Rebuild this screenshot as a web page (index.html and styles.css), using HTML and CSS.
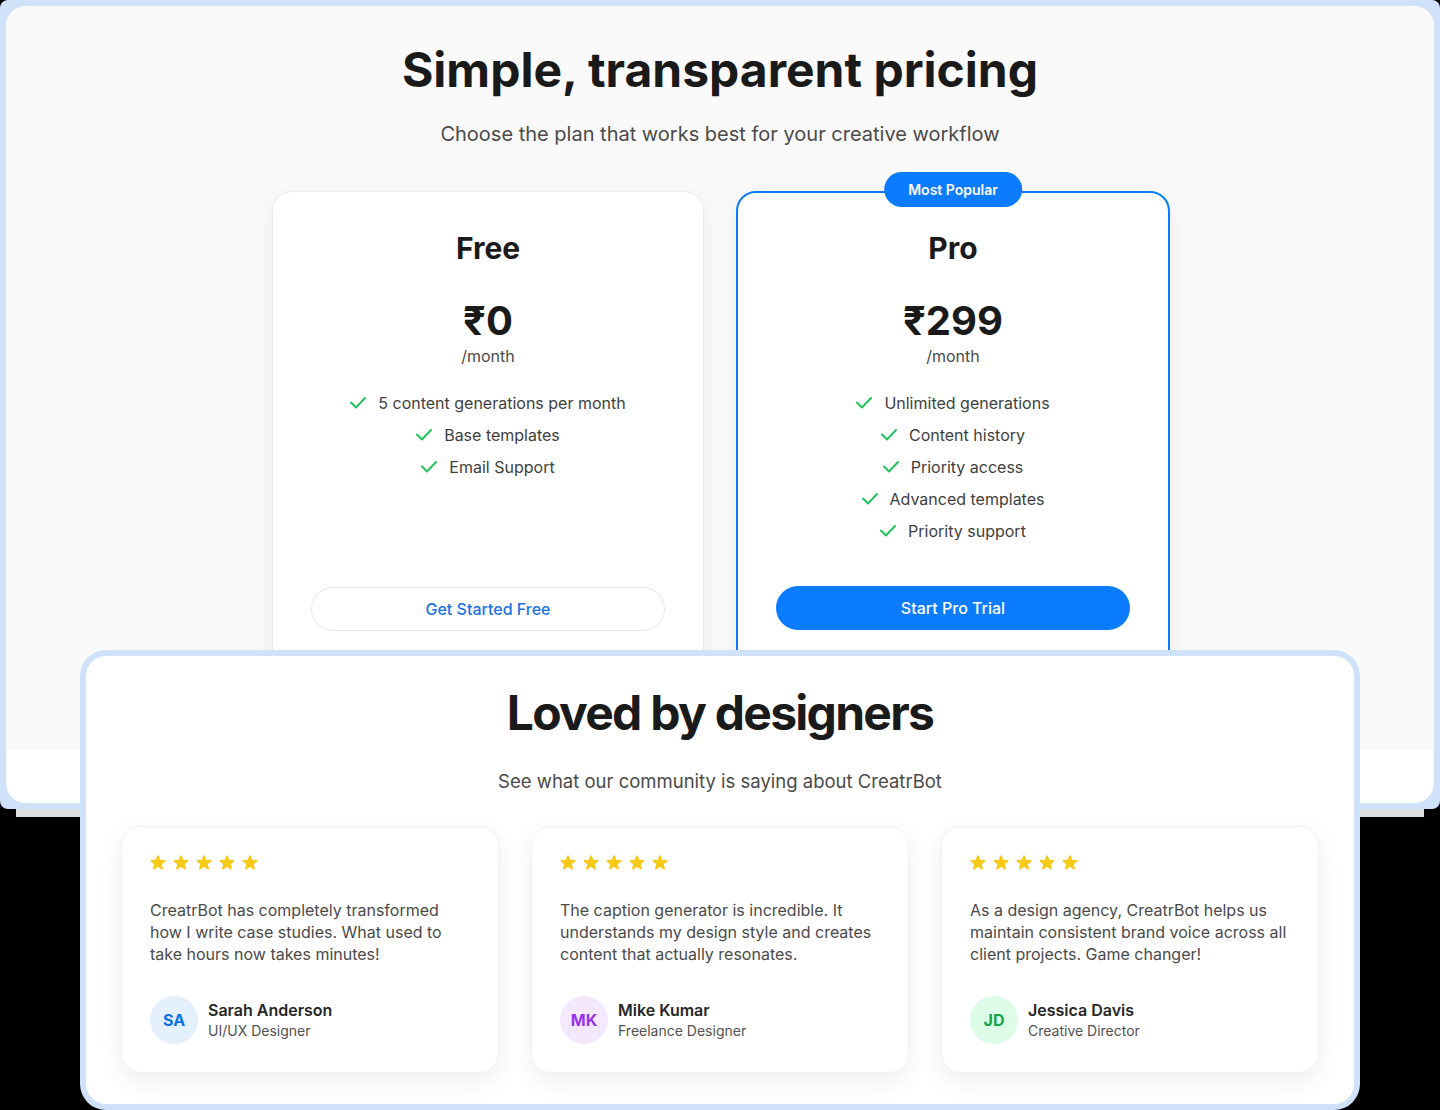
FILE: index.html
```html
<!DOCTYPE html>
<html lang="en">
<head>
<meta charset="utf-8">
<title>Pricing and testimonials</title>
<link rel="stylesheet" href="styles.css">
</head>
<body>
<div class="stage">
  <div class="window window-pricing">
    <div class="window-inner">
      <section class="pricing">
        <h1 class="heading">Simple, transparent pricing</h1>
        <p class="lead">Choose the plan that works best for your creative workflow</p>
        <div class="plans">
          <div class="plan">
            <h2 class="plan-name">Free</h2>
            <div class="price">₹0</div>
            <div class="per">/month</div>
            <ul class="features">
              <li><svg class="check" viewBox="0 0 16 16"><path d="M1 7.5L6 12.5L15 3"/></svg><span>5 content generations per month</span></li>
              <li><svg class="check" viewBox="0 0 16 16"><path d="M1 7.5L6 12.5L15 3"/></svg><span>Base templates</span></li>
              <li><svg class="check" viewBox="0 0 16 16"><path d="M1 7.5L6 12.5L15 3"/></svg><span>Email Support</span></li>
            </ul>
            <a class="btn btn-outline">Get Started Free</a>
          </div>
          <div class="plan plan-pro">
            <span class="badge">Most Popular</span>
            <h2 class="plan-name">Pro</h2>
            <div class="price">₹299</div>
            <div class="per">/month</div>
            <ul class="features">
              <li><svg class="check" viewBox="0 0 16 16"><path d="M1 7.5L6 12.5L15 3"/></svg><span>Unlimited generations</span></li>
              <li><svg class="check" viewBox="0 0 16 16"><path d="M1 7.5L6 12.5L15 3"/></svg><span>Content history</span></li>
              <li><svg class="check" viewBox="0 0 16 16"><path d="M1 7.5L6 12.5L15 3"/></svg><span>Priority access</span></li>
              <li><svg class="check" viewBox="0 0 16 16"><path d="M1 7.5L6 12.5L15 3"/></svg><span>Advanced templates</span></li>
              <li><svg class="check" viewBox="0 0 16 16"><path d="M1 7.5L6 12.5L15 3"/></svg><span>Priority support</span></li>
            </ul>
            <a class="btn btn-solid">Start Pro Trial</a>
          </div>
        </div>
      </section>
      <div class="next-strip"></div>
    </div>
  </div>

  <div class="window window-testimonials">
    <div class="window-inner testimonials">
      <h2 class="heading heading-tight">Loved by designers</h2>
      <p class="lead lead-2">See what our community is saying about CreatrBot</p>
      <div class="reviews">
        <div class="review">
          <div class="stars">
            <svg viewBox="0 0 20 20"><path d="M9.049 2.927c.3-.921 1.603-.921 1.902 0l1.07 3.292a1 1 0 00.95.69h3.462c.969 0 1.371 1.24.588 1.81l-2.8 2.034a1 1 0 00-.364 1.118l1.07 3.292c.3.921-.755 1.688-1.54 1.118l-2.8-2.034a1 1 0 00-1.175 0l-2.8 2.034c-.784.57-1.838-.197-1.539-1.118l1.07-3.292a1 1 0 00-.364-1.118L2.98 8.72c-.783-.57-.38-1.81.588-1.81h3.461a1 1 0 00.951-.69l1.07-3.292z"/></svg>
            <svg viewBox="0 0 20 20"><path d="M9.049 2.927c.3-.921 1.603-.921 1.902 0l1.07 3.292a1 1 0 00.95.69h3.462c.969 0 1.371 1.24.588 1.81l-2.8 2.034a1 1 0 00-.364 1.118l1.07 3.292c.3.921-.755 1.688-1.54 1.118l-2.8-2.034a1 1 0 00-1.175 0l-2.8 2.034c-.784.57-1.838-.197-1.539-1.118l1.07-3.292a1 1 0 00-.364-1.118L2.98 8.72c-.783-.57-.38-1.81.588-1.81h3.461a1 1 0 00.951-.69l1.07-3.292z"/></svg>
            <svg viewBox="0 0 20 20"><path d="M9.049 2.927c.3-.921 1.603-.921 1.902 0l1.07 3.292a1 1 0 00.95.69h3.462c.969 0 1.371 1.24.588 1.81l-2.8 2.034a1 1 0 00-.364 1.118l1.07 3.292c.3.921-.755 1.688-1.54 1.118l-2.8-2.034a1 1 0 00-1.175 0l-2.8 2.034c-.784.57-1.838-.197-1.539-1.118l1.07-3.292a1 1 0 00-.364-1.118L2.98 8.72c-.783-.57-.38-1.81.588-1.81h3.461a1 1 0 00.951-.69l1.07-3.292z"/></svg>
            <svg viewBox="0 0 20 20"><path d="M9.049 2.927c.3-.921 1.603-.921 1.902 0l1.07 3.292a1 1 0 00.95.69h3.462c.969 0 1.371 1.24.588 1.81l-2.8 2.034a1 1 0 00-.364 1.118l1.07 3.292c.3.921-.755 1.688-1.54 1.118l-2.8-2.034a1 1 0 00-1.175 0l-2.8 2.034c-.784.57-1.838-.197-1.539-1.118l1.07-3.292a1 1 0 00-.364-1.118L2.98 8.72c-.783-.57-.38-1.81.588-1.81h3.461a1 1 0 00.951-.69l1.07-3.292z"/></svg>
            <svg viewBox="0 0 20 20"><path d="M9.049 2.927c.3-.921 1.603-.921 1.902 0l1.07 3.292a1 1 0 00.95.69h3.462c.969 0 1.371 1.24.588 1.81l-2.8 2.034a1 1 0 00-.364 1.118l1.07 3.292c.3.921-.755 1.688-1.54 1.118l-2.8-2.034a1 1 0 00-1.175 0l-2.8 2.034c-.784.57-1.838-.197-1.539-1.118l1.07-3.292a1 1 0 00-.364-1.118L2.98 8.72c-.783-.57-.38-1.81.588-1.81h3.461a1 1 0 00.951-.69l1.07-3.292z"/></svg>
          </div>
          <p class="quote">CreatrBot has completely transformed how I write case studies. What used to take hours now takes minutes!</p>
          <div class="author">
            <div class="avatar avatar-blue">SA</div>
            <div class="who">
              <div class="name">Sarah Anderson</div>
              <div class="role">UI/UX Designer</div>
            </div>
          </div>
        </div>
        <div class="review">
          <div class="stars">
            <svg viewBox="0 0 20 20"><path d="M9.049 2.927c.3-.921 1.603-.921 1.902 0l1.07 3.292a1 1 0 00.95.69h3.462c.969 0 1.371 1.24.588 1.81l-2.8 2.034a1 1 0 00-.364 1.118l1.07 3.292c.3.921-.755 1.688-1.54 1.118l-2.8-2.034a1 1 0 00-1.175 0l-2.8 2.034c-.784.57-1.838-.197-1.539-1.118l1.07-3.292a1 1 0 00-.364-1.118L2.98 8.72c-.783-.57-.38-1.81.588-1.81h3.461a1 1 0 00.951-.69l1.07-3.292z"/></svg>
            <svg viewBox="0 0 20 20"><path d="M9.049 2.927c.3-.921 1.603-.921 1.902 0l1.07 3.292a1 1 0 00.95.69h3.462c.969 0 1.371 1.24.588 1.81l-2.8 2.034a1 1 0 00-.364 1.118l1.07 3.292c.3.921-.755 1.688-1.54 1.118l-2.8-2.034a1 1 0 00-1.175 0l-2.8 2.034c-.784.57-1.838-.197-1.539-1.118l1.07-3.292a1 1 0 00-.364-1.118L2.98 8.72c-.783-.57-.38-1.81.588-1.81h3.461a1 1 0 00.951-.69l1.07-3.292z"/></svg>
            <svg viewBox="0 0 20 20"><path d="M9.049 2.927c.3-.921 1.603-.921 1.902 0l1.07 3.292a1 1 0 00.95.69h3.462c.969 0 1.371 1.24.588 1.81l-2.8 2.034a1 1 0 00-.364 1.118l1.07 3.292c.3.921-.755 1.688-1.54 1.118l-2.8-2.034a1 1 0 00-1.175 0l-2.8 2.034c-.784.57-1.838-.197-1.539-1.118l1.07-3.292a1 1 0 00-.364-1.118L2.98 8.72c-.783-.57-.38-1.81.588-1.81h3.461a1 1 0 00.951-.69l1.07-3.292z"/></svg>
            <svg viewBox="0 0 20 20"><path d="M9.049 2.927c.3-.921 1.603-.921 1.902 0l1.07 3.292a1 1 0 00.95.69h3.462c.969 0 1.371 1.24.588 1.81l-2.8 2.034a1 1 0 00-.364 1.118l1.07 3.292c.3.921-.755 1.688-1.54 1.118l-2.8-2.034a1 1 0 00-1.175 0l-2.8 2.034c-.784.57-1.838-.197-1.539-1.118l1.07-3.292a1 1 0 00-.364-1.118L2.98 8.72c-.783-.57-.38-1.81.588-1.81h3.461a1 1 0 00.951-.69l1.07-3.292z"/></svg>
            <svg viewBox="0 0 20 20"><path d="M9.049 2.927c.3-.921 1.603-.921 1.902 0l1.07 3.292a1 1 0 00.95.69h3.462c.969 0 1.371 1.24.588 1.81l-2.8 2.034a1 1 0 00-.364 1.118l1.07 3.292c.3.921-.755 1.688-1.54 1.118l-2.8-2.034a1 1 0 00-1.175 0l-2.8 2.034c-.784.57-1.838-.197-1.539-1.118l1.07-3.292a1 1 0 00-.364-1.118L2.98 8.72c-.783-.57-.38-1.81.588-1.81h3.461a1 1 0 00.951-.69l1.07-3.292z"/></svg>
          </div>
          <p class="quote">The caption generator is incredible. It understands my design style and creates content that actually resonates.</p>
          <div class="author">
            <div class="avatar avatar-purple">MK</div>
            <div class="who">
              <div class="name">Mike Kumar</div>
              <div class="role">Freelance Designer</div>
            </div>
          </div>
        </div>
        <div class="review">
          <div class="stars">
            <svg viewBox="0 0 20 20"><path d="M9.049 2.927c.3-.921 1.603-.921 1.902 0l1.07 3.292a1 1 0 00.95.69h3.462c.969 0 1.371 1.24.588 1.81l-2.8 2.034a1 1 0 00-.364 1.118l1.07 3.292c.3.921-.755 1.688-1.54 1.118l-2.8-2.034a1 1 0 00-1.175 0l-2.8 2.034c-.784.57-1.838-.197-1.539-1.118l1.07-3.292a1 1 0 00-.364-1.118L2.98 8.72c-.783-.57-.38-1.81.588-1.81h3.461a1 1 0 00.951-.69l1.07-3.292z"/></svg>
            <svg viewBox="0 0 20 20"><path d="M9.049 2.927c.3-.921 1.603-.921 1.902 0l1.07 3.292a1 1 0 00.95.69h3.462c.969 0 1.371 1.24.588 1.81l-2.8 2.034a1 1 0 00-.364 1.118l1.07 3.292c.3.921-.755 1.688-1.54 1.118l-2.8-2.034a1 1 0 00-1.175 0l-2.8 2.034c-.784.57-1.838-.197-1.539-1.118l1.07-3.292a1 1 0 00-.364-1.118L2.98 8.72c-.783-.57-.38-1.81.588-1.81h3.461a1 1 0 00.951-.69l1.07-3.292z"/></svg>
            <svg viewBox="0 0 20 20"><path d="M9.049 2.927c.3-.921 1.603-.921 1.902 0l1.07 3.292a1 1 0 00.95.69h3.462c.969 0 1.371 1.24.588 1.81l-2.8 2.034a1 1 0 00-.364 1.118l1.07 3.292c.3.921-.755 1.688-1.54 1.118l-2.8-2.034a1 1 0 00-1.175 0l-2.8 2.034c-.784.57-1.838-.197-1.539-1.118l1.07-3.292a1 1 0 00-.364-1.118L2.98 8.72c-.783-.57-.38-1.81.588-1.81h3.461a1 1 0 00.951-.69l1.07-3.292z"/></svg>
            <svg viewBox="0 0 20 20"><path d="M9.049 2.927c.3-.921 1.603-.921 1.902 0l1.07 3.292a1 1 0 00.95.69h3.462c.969 0 1.371 1.24.588 1.81l-2.8 2.034a1 1 0 00-.364 1.118l1.07 3.292c.3.921-.755 1.688-1.54 1.118l-2.8-2.034a1 1 0 00-1.175 0l-2.8 2.034c-.784.57-1.838-.197-1.539-1.118l1.07-3.292a1 1 0 00-.364-1.118L2.98 8.72c-.783-.57-.38-1.81.588-1.81h3.461a1 1 0 00.951-.69l1.07-3.292z"/></svg>
            <svg viewBox="0 0 20 20"><path d="M9.049 2.927c.3-.921 1.603-.921 1.902 0l1.07 3.292a1 1 0 00.95.69h3.462c.969 0 1.371 1.24.588 1.81l-2.8 2.034a1 1 0 00-.364 1.118l1.07 3.292c.3.921-.755 1.688-1.54 1.118l-2.8-2.034a1 1 0 00-1.175 0l-2.8 2.034c-.784.57-1.838-.197-1.539-1.118l1.07-3.292a1 1 0 00-.364-1.118L2.98 8.72c-.783-.57-.38-1.81.588-1.81h3.461a1 1 0 00.951-.69l1.07-3.292z"/></svg>
          </div>
          <p class="quote">As a design agency, CreatrBot helps us maintain consistent brand voice across all client projects. Game changer!</p>
          <div class="author">
            <div class="avatar avatar-green">JD</div>
            <div class="who">
              <div class="name">Jessica Davis</div>
              <div class="role">Creative Director</div>
            </div>
          </div>
        </div>
      </div>
    </div>
  </div>
</div>
</body>
</html>
```

FILE: styles.css
```css
* { box-sizing: border-box; }

html, body {
  margin: 0;
  padding: 0;
  background: #000;
}

body {
  font-family: Inter, "Noto Sans", "Liberation Sans", sans-serif;
  height: 1110px;
  overflow: hidden;
  -webkit-font-smoothing: antialiased;
}

.stage {
  position: relative;
  width: 1440px;
  height: 1110px;
}

.window {
  background: #cfe2f9;
  padding: 6px;
}

.window-inner {
  background: #fff;
  border-radius: 20px;
  overflow: hidden;
  height: 100%;
}

/* ---------- pricing window ---------- */
.window-pricing {
  height: 809px;
  border-radius: 8px;
  box-shadow: 0 24px 0 -16px #dedede;
}

.pricing {
  background: #fafafa;
  height: 744px;
  padding-top: 40px;
  text-align: center;
}

.heading {
  margin: 0;
  font-size: 48px;
  line-height: 48px;
  font-weight: 700;
  color: #1a1a1a;
}

.lead {
  margin: 26px 0 0;
  font-size: 20px;
  line-height: 28px;
  color: #4a4a4a;
}

.plans {
  display: grid;
  grid-template-columns: 432px 434px;
  gap: 32px;
  justify-content: center;
  margin-top: 43px;
  padding-left: 2px;
}

.plan {
  position: relative;
  background: #fff;
  border: 1px solid #ececec;
  border-radius: 20px;
  padding: 40px 38px;
  display: flex;
  flex-direction: column;
  align-items: center;
  box-shadow: 0 6px 24px rgba(0, 0, 0, 0.06);
}

.plan-pro {
  border: 2px solid #0b7cff;
  padding: 39px 38px 40px;
}

.badge {
  position: absolute;
  top: -21px;
  left: 50%;
  transform: translateX(-50%);
  height: 35px;
  line-height: 35px;
  padding: 0 24px;
  border-radius: 999px;
  background: #0b7cff;
  color: #fff;
  font-size: 14px;
  font-weight: 600;
  white-space: nowrap;
}

.plan-name {
  margin: 0;
  font-size: 30px;
  line-height: 32px;
  font-weight: 700;
  color: #1a1a1a;
}

.price {
  margin-top: 33px;
  font-size: 40px;
  line-height: 48px;
  font-weight: 700;
  color: #1a1a1a;
}

.per {
  margin-top: -1px;
  font-size: 16px;
  line-height: 24px;
  color: #4a4a4a;
}

.features {
  list-style: none;
  margin: 23px 0 43px;
  padding: 0;
  display: flex;
  flex-direction: column;
  align-items: center;
  gap: 8px;
}

.features li {
  display: flex;
  align-items: center;
  gap: 12px;
  font-size: 16px;
  line-height: 24px;
  color: #404040;
}

.check {
  width: 16px;
  height: 16px;
  fill: none;
  stroke: #22c55e;
  stroke-width: 2;
  stroke-linecap: round;
  stroke-linejoin: round;
}

.btn {
  margin-top: auto;
  width: 100%;
  height: 44px;
  border-radius: 999px;
  display: flex;
  align-items: center;
  justify-content: center;
  font-size: 16px;
  font-weight: 500;
}

.btn-outline {
  background: #fff;
  border: 1px solid #e5e7eb;
  color: #1a73e0;
}

.btn-solid {
  background: #0b7cff;
  color: #fff;
}

.next-strip {
  background: #fff;
}

/* ---------- testimonials window ---------- */
.window-testimonials {
  position: absolute;
  left: 80px;
  top: 650px;
  width: 1280px;
  height: 460px;
  border-radius: 26px;
}

.testimonials {
  padding-top: 33px;
  text-align: center;
}

.heading-tight {
  letter-spacing: -0.036em;
}

.lead-2 {
  margin-top: 30px;
  font-size: 18.5px;
}

.reviews {
  display: grid;
  grid-template-columns: repeat(3, 378px);
  gap: 32px;
  justify-content: center;
  margin-top: 31px;
}

.review {
  height: 247px;
  background: #fff;
  border: 1px solid #f2f2f2;
  border-radius: 20px;
  padding: 26px 28px 28px;
  text-align: left;
  box-shadow: 0 8px 24px rgba(0, 0, 0, 0.07);
}

.stars {
  display: flex;
  gap: 3px;
  margin-left: -2px;
  margin-bottom: 26px;
}

.stars svg {
  width: 20px;
  height: 20px;
  fill: #f9c917;
}

.quote {
  margin: 0;
  font-size: 16px;
  line-height: 22px;
  color: #4a4a4a;
}

.author {
  margin-top: 31px;
  display: flex;
  align-items: center;
  gap: 10px;
}

.avatar {
  width: 48px;
  height: 48px;
  border-radius: 50%;
  display: flex;
  align-items: center;
  justify-content: center;
  font-size: 16px;
  font-weight: 700;
}

.avatar-blue { background: #e4f0fd; color: #0b74e5; }
.avatar-purple { background: #f3e8ff; color: #9333ea; }
.avatar-green { background: #dcfce7; color: #16a34a; }

.name {
  font-size: 16px;
  line-height: 20px;
  font-weight: 600;
  color: #262626;
}

.role {
  margin-top: 1px;
  font-size: 14px;
  line-height: 20px;
  color: #525252;
}
```
